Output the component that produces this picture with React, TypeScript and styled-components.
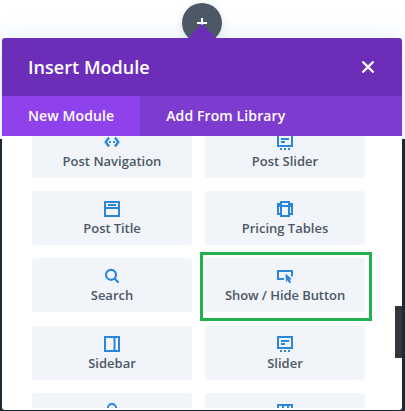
import React from "react";
import styled, { createGlobalStyle } from "styled-components";

const GlobalStyle = createGlobalStyle`
  * { box-sizing: border-box; }
  body { margin: 0; background: #fff; font-family: "Open Sans", sans-serif; overflow: hidden; }
`;

const Page = styled.div`
  position: relative;
  width: 405px;
  height: 411px;
  padding: 38px 3px 1px 2px;
  overflow: hidden;
  background: linear-gradient(#fff 139px, #1d2935 139px);
`;

const AddButton = styled.div`
  position: absolute;
  left: 182px;
  top: 3px;
  width: 40px;
  height: 40px;
  border-radius: 50%;
  background: #4c5866;
  box-shadow: 0 2px 8px rgba(60, 80, 100, 0.15);
`;

const Pointer = styled.div`
  position: absolute;
  left: 188px;
  top: 24px;
  border: 14px solid transparent;
  border-top: 0;
  border-bottom-color: #6c2eb9;
`;

const Glow = styled.div`
  position: absolute;
  left: 0;
  top: 0;
  width: 405px;
  height: 139px;
  overflow: hidden;
  &::before {
    content: "";
    position: absolute;
    left: 2px;
    top: 38px;
    width: 400px;
    height: 372px;
    border-radius: 3px;
    box-shadow: 0 5px 30px rgba(43, 135, 218, 0.2);
  }
`;

const Modal = styled.section`
  position: relative;
  display: flex;
  flex-direction: column;
  height: 372px;
  background: #fff;
  border-radius: 3px;
  overflow: hidden;
`;

const Header = styled.header`
  display: flex;
  flex: 0 0 58px;
  align-items: center;
  justify-content: space-between;
  padding: 0 28px 0 26px;
  background: #6c2eb9;
  color: #fff;
`;

const Title = styled.h1`
  margin: 0;
  font-size: 18px;
  line-height: 24px;
  font-weight: 600;
  letter-spacing: 0.04px;
`;

const CloseButton = styled.button`
  display: flex;
  padding: 0;
  border: 0;
  background: none;
`;

const Tabs = styled.nav`
  display: flex;
  flex: 0 0 40px;
  background: #7e3bd0;
`;

const Tab = styled.button<{ $active?: boolean }>`
  padding: 0 26px;
  border: 0;
  background: ${(p) => (p.$active ? "#8f42ec" : "transparent")};
  color: #fff;
  font: 600 14px/40px "Open Sans", sans-serif;
  letter-spacing: 0.11px;
  white-space: nowrap;
`;

const Body = styled.div`
  position: relative;
  height: 272px;
  overflow: hidden;
`;

const Grid = styled.div`
  display: grid;
  grid-template-columns: 160px 160px;
  grid-template-rows: 54px 54px 54px 55px 54px;
  gap: 13px;
  margin: -12px 0 0 30px;
`;

const Tile = styled.div<{ $late?: boolean; $tight?: boolean }>`
  display: flex;
  flex-direction: column;
  align-items: center;
  height: 54px;
  margin-top: ${(p) => (p.$late ? "1px" : "0")};
  padding-top: 10px;
  border-radius: 3px;
  background: #f1f4f9;
  color: #4c5866;
  font-size: 13px;
  font-weight: 600;
  line-height: 18px;
  letter-spacing: ${(p) => (p.$tight ? "-0.07px" : "0")};
  white-space: nowrap;
  svg { display: block; margin-bottom: 2px; }
`;

const Highlight = styled.div`
  position: absolute;
  left: 198px;
  top: 116px;
  width: 172px;
  height: 69px;
  border: 3px solid #22b14c;
`;

const ScrollThumb = styled.div`
  position: absolute;
  right: 0;
  top: 170px;
  width: 7px;
  height: 52px;
  background: #32373c;
`;

const BLUE = "#2b87da";

const icons: Record<string, React.ReactNode> = {
  navigation: (
    <>
      <path d="M5 3.5L1.7 8L5 12.5M11 3.5L14.3 8L11 12.5" strokeWidth="2.4" />
      <path d="M5 8h2M9 8h2" />
    </>
  ),
  slider: (
    <>
      <path d="M1 1h14v11H1z" />
      <path d="M4 5h8M4 8h4" />
      <path d="M3 15h2M7 15h2M11 15h2" />
    </>
  ),
  title: (
    <>
      <path d="M1 1h14v14H1zM1 7h14" />
      <path d="M4 4h8" />
    </>
  ),
  pricing: (
    <>
      <path d="M4 1h8v14H4z" />
      <path d="M4 3H1v10h3M12 3h3v10h-3M1 5h14" />
    </>
  ),
  search: (
    <>
      <circle cx="7" cy="6.8" r="5" strokeWidth="2.2" />
      <path d="M10.7 10.7L14 14" strokeLinecap="round" strokeWidth="2.2" />
    </>
  ),
  button: (
    <>
      <path d="M7 11H1V3h14v5.5" />
      <path d="M8.5 5.5l6.5 5.8-2.4.3 1.5 2.7-1.9 1-1.4-2.8L9 14z" fill={BLUE} stroke="none" />
    </>
  ),
  sidebar: <path d="M1 1h14v14H1zM10.5 1v14" />,
  person: (
    <>
      <circle cx="8" cy="5" r="4.1" />
      <path d="M2 15v-2l3-2h6l3 2v2" />
    </>
  ),
  table: <path d="M1 2h14v13H1zM6 2v13M11 2v13M1 6h14" />,
};

const modules = [
  { icon: "navigation", label: "Post Navigation" },
  { icon: "slider", label: "Post Slider" },
  { icon: "title", label: "Post Title" },
  { icon: "pricing", label: "Pricing Tables" },
  { icon: "search", label: "Search" },
  { icon: "button", label: "Show / Hide Button" },
  { icon: "sidebar", label: "Sidebar" },
  { icon: "slider", label: "Slider" },
  { icon: "person", label: "" },
  { icon: "table", label: "" },
];

export default function App() {
  return (
    <Page>
      <GlobalStyle />
      <Glow />
      <AddButton>
        <svg width="40" height="40" viewBox="0 0 40 40" stroke="#fff" strokeWidth="2">
          <path d="M20 15v10M15 20h10" />
        </svg>
      </AddButton>
      <Pointer />
      <Modal>
        <Header>
          <Title>Insert Module</Title>
          <CloseButton aria-label="Close">
            <svg width="12" height="12" viewBox="0 0 12 12" stroke="#fff" strokeWidth="2.3" strokeLinecap="round">
              <path d="M1.2 1.2l9.6 9.6M10.8 1.2L1.2 10.8" />
            </svg>
          </CloseButton>
        </Header>
        <Tabs>
          <Tab $active>New Module</Tab>
          <Tab>Add From Library</Tab>
        </Tabs>
        <Body>
          <Grid>
            {modules.map((m, i) => (
              <Tile key={i} $late={i === 6 || i === 7} $tight={m.icon === "button" || m.icon === "title"}>
                <svg width="16" height="16" viewBox="0 0 16 16" fill="none" stroke={BLUE} strokeWidth="2">
                  {icons[m.icon]}
                </svg>
                {m.label}
              </Tile>
            ))}
          </Grid>
          <Highlight />
          <ScrollThumb />
        </Body>
      </Modal>
    </Page>
  );
}
